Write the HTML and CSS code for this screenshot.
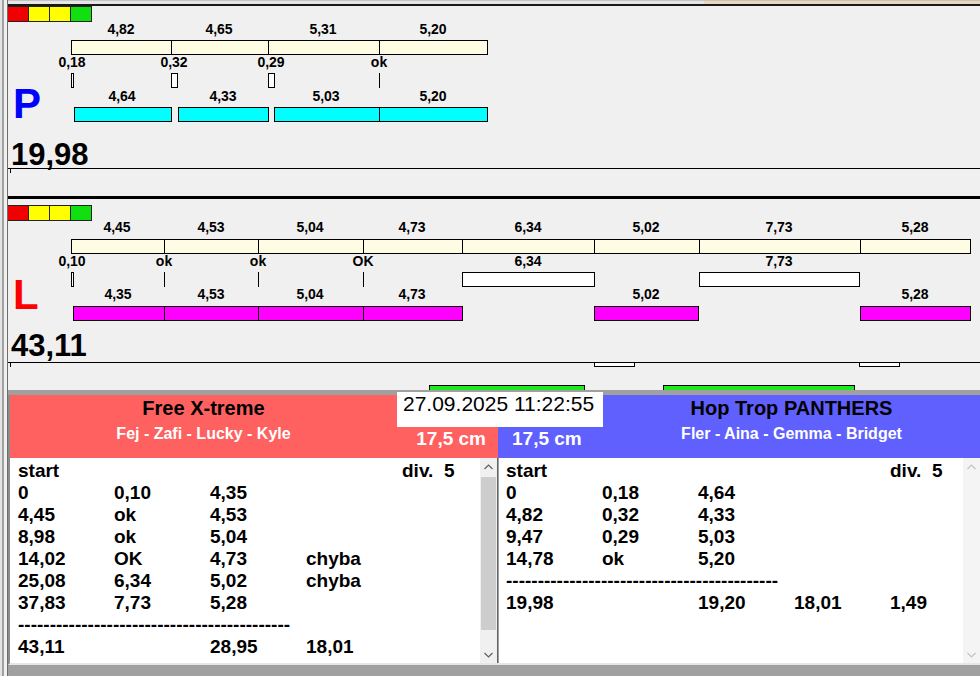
FILE: index.html
```html
<!DOCTYPE html>
<html lang="cs">
<head>
<meta charset="utf-8">
<title>Agility</title>
<link rel="stylesheet" href="styles.css">
</head>
<body>
<div class="app">
  <div class="frame"></div>
  <div class="main">
    <div class="topstrip"></div>

    <div class="chart chart-p">
      <div class="lights"><i class="red"></i><i class="yel"></i><i class="yel"></i><i class="grn"></i></div>

      <span class="lab r-top" style="left:113px">4,82</span>
      <span class="lab r-top" style="left:211px">4,65</span>
      <span class="lab r-top" style="left:315px">5,31</span>
      <span class="lab r-top" style="left:425px">5,20</span>

      <div class="seg cream r-bar1" style="left:63px;width:101px"></div>
      <div class="seg cream r-bar1" style="left:163px;width:98px"></div>
      <div class="seg cream r-bar1" style="left:260px;width:112px"></div>
      <div class="seg cream r-bar1" style="left:371px;width:109px"></div>

      <span class="lab r-gap" style="left:64px">0,18</span>
      <span class="lab r-gap" style="left:166px">0,32</span>
      <span class="lab r-gap" style="left:263px">0,29</span>
      <span class="lab r-gap" style="left:371px">ok</span>

      <div class="tick r-tick" style="left:63px;width:3px"></div>
      <div class="tick r-tick" style="left:163px;width:7px"></div>
      <div class="tick r-tick" style="left:260px;width:7px"></div>
      <div class="tickline r-tick" style="left:371px"></div>

      <span class="lab r-lab2" style="left:114px">4,64</span>
      <span class="lab r-lab2" style="left:215px">4,33</span>
      <span class="lab r-lab2" style="left:318px">5,03</span>
      <span class="lab r-lab2" style="left:425px">5,20</span>

      <div class="seg cyan r-bar2" style="left:66px;width:98px"></div>
      <div class="seg cyan r-bar2" style="left:170px;width:91px"></div>
      <div class="seg cyan r-bar2" style="left:266px;width:106px"></div>
      <div class="seg cyan r-bar2" style="left:371px;width:109px"></div>

      <div class="letter letter-p">P</div>
      <div class="total">19,98</div>
      <div class="axis"></div>
      <div class="axis-tick"></div>
    </div>

    <div class="sep"></div>

    <div class="chart chart-l">
      <div class="lights"><i class="red"></i><i class="yel"></i><i class="yel"></i><i class="grn"></i></div>

      <span class="lab r-top" style="left:109px">4,45</span>
      <span class="lab r-top" style="left:203px">4,53</span>
      <span class="lab r-top" style="left:302px">5,04</span>
      <span class="lab r-top" style="left:404px">4,73</span>
      <span class="lab r-top" style="left:520px">6,34</span>
      <span class="lab r-top" style="left:638px">5,02</span>
      <span class="lab r-top" style="left:771px">7,73</span>
      <span class="lab r-top" style="left:907px">5,28</span>

      <div class="seg cream r-bar1" style="left:63px;width:94px"></div>
      <div class="seg cream r-bar1" style="left:156px;width:95px"></div>
      <div class="seg cream r-bar1" style="left:250px;width:106px"></div>
      <div class="seg cream r-bar1" style="left:355px;width:100px"></div>
      <div class="seg cream r-bar1" style="left:454px;width:133px"></div>
      <div class="seg cream r-bar1" style="left:586px;width:106px"></div>
      <div class="seg cream r-bar1" style="left:691px;width:162px"></div>
      <div class="seg cream r-bar1" style="left:852px;width:111px"></div>

      <span class="lab r-gap" style="left:64px">0,10</span>
      <span class="lab r-gap" style="left:156px">ok</span>
      <span class="lab r-gap" style="left:250px">ok</span>
      <span class="lab r-gap" style="left:355px">OK</span>
      <span class="lab r-gap" style="left:520px">6,34</span>
      <span class="lab r-gap" style="left:771px">7,73</span>

      <div class="tick r-tick" style="left:63px;width:3px"></div>
      <div class="tickline r-tick" style="left:156px"></div>
      <div class="tickline r-tick" style="left:250px"></div>
      <div class="tickline r-tick" style="left:355px"></div>
      <div class="seg white r-tick" style="left:454px;width:133px"></div>
      <div class="seg white r-tick" style="left:691px;width:161px"></div>

      <span class="lab r-lab2" style="left:110px">4,35</span>
      <span class="lab r-lab2" style="left:203px">4,53</span>
      <span class="lab r-lab2" style="left:302px">5,04</span>
      <span class="lab r-lab2" style="left:404px">4,73</span>
      <span class="lab r-lab2" style="left:638px">5,02</span>
      <span class="lab r-lab2" style="left:907px">5,28</span>

      <div class="seg magenta r-bar2" style="left:65px;width:92px"></div>
      <div class="seg magenta r-bar2" style="left:156px;width:95px"></div>
      <div class="seg magenta r-bar2" style="left:250px;width:106px"></div>
      <div class="seg magenta r-bar2" style="left:355px;width:100px"></div>
      <div class="seg magenta r-bar2" style="left:586px;width:105px"></div>
      <div class="seg magenta r-bar2" style="left:852px;width:111px"></div>

      <div class="letter letter-l">L</div>
      <div class="total">43,11</div>
      <div class="axis"></div>
      <div class="axis-tick"></div>
      <div class="seg white r-under" style="left:586px;width:41px"></div>
      <div class="seg white r-under" style="left:851px;width:41px"></div>
      <div class="seg green r-green" style="left:421px;width:156px"></div>
      <div class="seg green r-green" style="left:655px;width:192px"></div>
    </div>

    <div class="band"></div>

    <div class="bottom">
      <section class="team team-red">
        <header class="team-head">
          <div class="team-name">Free X-treme</div>
          <div class="team-dogs">Fej - Zafi - Lucky - Kyle</div>
          <div class="team-size">17,5 cm</div>
        </header>
        <div class="list-wrap">
          <div class="list">
            <div class="row"><span>start</span><span></span><span></span><span></span><span class="pre">div.  5</span></div>
            <div class="row"><span>0</span><span>0,10</span><span>4,35</span></div>
            <div class="row"><span>4,45</span><span>ok</span><span>4,53</span></div>
            <div class="row"><span>8,98</span><span>ok</span><span>5,04</span></div>
            <div class="row"><span>14,02</span><span>OK</span><span>4,73</span><span>chyba</span></div>
            <div class="row"><span>25,08</span><span>6,34</span><span>5,02</span><span>chyba</span></div>
            <div class="row"><span>37,83</span><span>7,73</span><span>5,28</span></div>
            <div class="row"><span class="dashes">-------------------------------------------</span></div>
            <div class="row"><span>43,11</span><span></span><span>28,95</span><span>18,01</span></div>
          </div>
          <div class="scrollbar">
            <div class="sb-btn"><svg width="9" height="6" viewBox="0 0 9 6"><polyline points="0.5,5 4.5,1 8.5,5" fill="none" stroke="currentColor" stroke-width="1.2"/></svg></div>
            <div class="sb-track"><div class="sb-thumb"></div></div>
            <div class="sb-btn"><svg width="9" height="6" viewBox="0 0 9 6"><polyline points="0.5,1 4.5,5 8.5,1" fill="none" stroke="currentColor" stroke-width="1.2"/></svg></div>
          </div>
        </div>
      </section>

      <section class="team team-blue">
        <header class="team-head">
          <div class="team-name">Hop Trop PANTHERS</div>
          <div class="team-dogs">Fler - Aina - Gemma - Bridget</div>
          <div class="team-size">17,5 cm</div>
        </header>
        <div class="list-wrap">
          <div class="list">
            <div class="row"><span>start</span><span></span><span></span><span></span><span class="pre">div.  5</span></div>
            <div class="row"><span>0</span><span>0,18</span><span>4,64</span></div>
            <div class="row"><span>4,82</span><span>0,32</span><span>4,33</span></div>
            <div class="row"><span>9,47</span><span>0,29</span><span>5,03</span></div>
            <div class="row"><span>14,78</span><span>ok</span><span>5,20</span></div>
            <div class="row"><span class="dashes">-------------------------------------------</span></div>
            <div class="row"><span>19,98</span><span></span><span>19,20</span><span>18,01</span><span>1,49</span></div>
          </div>
          <div class="scrollbar disabled">
            <div class="sb-btn"><svg width="9" height="6" viewBox="0 0 9 6"><polyline points="0.5,5 4.5,1 8.5,5" fill="none" stroke="currentColor" stroke-width="1.2"/></svg></div>
            <div class="sb-track"></div>
            <div class="sb-btn"><svg width="9" height="6" viewBox="0 0 9 6"><polyline points="0.5,1 4.5,5 8.5,1" fill="none" stroke="currentColor" stroke-width="1.2"/></svg></div>
          </div>
        </div>
      </section>
    </div>

    <div class="footer"></div>
  </div>

  <div class="datebox">27.09.2025 11:22:55</div>
</div>
</body>
</html>
```

FILE: styles.css
```css
* { box-sizing: border-box; }
html, body { margin: 0; padding: 0; }
body {
  width: 980px;
  height: 676px;
  overflow: hidden;
  background: #f0f0f0;
  font-family: "Liberation Sans", Arial, sans-serif;
  color: #000;
}
.app {
  position: relative;
  display: flex;
  width: 980px;
  height: 676px;
}
.frame {
  width: 8px;
  flex: none;
  background: linear-gradient(to right, #e3e3e3 0 2px, #a0a0a0 2px 4px, #f0f0f0 4px 7px, #6d6d6d 7px 8px);
}
.main {
  width: 972px;
  flex: none;
  display: flex;
  flex-direction: column;
}
.topstrip {
  height: 6px;
  flex: none;
  border-bottom: 2px solid #1a1a1a;
  background:
    linear-gradient(to bottom, #c4c4c4 0 1px, transparent 1px),
    linear-gradient(to right, #e6e6e6 0 696px, #ead7b7 696px);
}

/* ---------- chart canvas ---------- */
.chart {
  position: relative;
  overflow: hidden;
  flex: none;
}
.chart-p { height: 190px; }
.chart-l { height: 191px; padding-top: 6px; }
.sep { height: 3px; flex: none; background: #000; }

.lights {
  display: flex;
  height: 16px;
  border-top: 1px solid #222;
  border-bottom: 1px solid #222;
  width: 84px;
}
.lights i {
  width: 21px;
  border-right: 1px solid #222;
}
.lights .red { background: #f00000; }
.lights .yel { background: #ffff00; }
.lights .grn { background: #10e010; }

.lab {
  position: absolute;
  transform: translateX(-50%);
  font-size: 14px;
  font-weight: bold;
  line-height: 15px;
  white-space: nowrap;
}
.seg {
  position: absolute;
  height: 15px;
  border: 1px solid #000;
}
.cream { background: #fefce2; }
.cyan { background: #00ffff; }
.magenta { background: #ff00ff; }
.white { background: #ffffff; }
.green { background: #1ee81e; height: 12px; }
.tick {
  position: absolute;
  height: 15px;
  border: 1px solid #000;
  background: #fff;
}
.tickline {
  position: absolute;
  width: 1px;
  height: 15px;
  background: #000;
}

.chart-p .r-top { top: 16px; }
.chart-p .r-bar1 { top: 34px; }
.chart-p .r-gap { top: 49px; }
.chart-p .r-tick { top: 67px; }
.chart-p .r-lab2 { top: 83px; }
.chart-p .r-bar2 { top: 101px; }

.chart-l .r-top { top: 21px; }
.chart-l .r-bar1 { top: 40px; }
.chart-l .r-gap { top: 55px; }
.chart-l .r-tick { top: 73px; }
.chart-l .r-lab2 { top: 88px; }
.chart-l .r-bar2 { top: 107px; }
.chart-l .r-under { top: 163px; height: 5px; }
.chart-l .r-green { top: 186px; }

.letter {
  position: absolute;
  left: 5px;
  font-size: 42px;
  line-height: 48px;
  font-weight: bold;
}
.letter-p { top: 74px; color: #0000ff; }
.letter-l { top: 72px; color: #ff0000; }

.total {
  position: absolute;
  left: 3px;
  font-size: 31px;
  line-height: 36px;
  font-weight: bold;
}
.chart-p .total { top: 131px; }
.chart-l .total { top: 129px; }

.axis {
  position: absolute;
  left: 0;
  right: 0;
  height: 1px;
  background: #000;
}
.axis-tick {
  position: absolute;
  left: 2px;
  width: 1px;
  height: 5px;
  background: #000;
}
.chart-p .axis { top: 162px; }
.chart-p .axis-tick { top: 162px; }
.chart-l .axis { top: 163px; }
.chart-l .axis-tick { top: 163px; }

.band { height: 5px; flex: none; background: #a0a0a0; }

/* ---------- bottom teams ---------- */
.bottom {
  height: 270px;
  flex: none;
  display: flex;
  border-left: 2px solid #8c8c8c;
  border-bottom: 2px solid #e6e6e6;
}
.team {
  display: flex;
  flex-direction: column;
}
.team-red { width: 488px; }
.team-blue { width: 482px; }

.team-head {
  height: 63px;
  flex: none;
  display: grid;
  grid-template-rows: 24px 1fr;
}
.team-red .team-head {
  background: #ff6060;
  grid-template-columns: 1fr 101px;
  grid-template-areas: "name ." "dogs size";
}
.team-blue .team-head {
  background: #6060ff;
  grid-template-columns: 105px 1fr;
  grid-template-areas: ". name" "size dogs";
}
.team-name {
  grid-area: name;
  margin-top: 1px;
  text-align: center;
  font-size: 20px;
  line-height: 24px;
  font-weight: bold;
  color: #000;
}
.team-dogs {
  grid-area: dogs;
  margin-top: 5px;
  text-align: center;
  font-size: 16px;
  line-height: 20px;
  font-weight: bold;
  color: #fff;
}
.team-size {
  grid-area: size;
  margin-top: 9px;
  font-size: 19px;
  line-height: 22px;
  font-weight: bold;
  color: #fff;
  white-space: nowrap;
}
.team-red .team-size { text-align: right; padding-right: 12px; }
.team-blue .team-size { padding-left: 14px; }

.list-wrap {
  height: 205px;
  flex: none;
  display: flex;
}
.team-red .list-wrap { border-right: 1px solid #646464; }
.team-blue .list-wrap { border-left: 1px solid #a0a0a0; }
.list {
  flex: 1;
  background: #fff;
  padding-top: 2px;
  font-size: 19px;
  line-height: 22px;
  font-weight: bold;
  overflow: hidden;
}
.team-red .list { padding-left: 8px; }
.team-blue .list { padding-left: 7px; }
.row {
  display: grid;
  grid-template-columns: repeat(5, 96px);
  height: 22px;
  white-space: nowrap;
}
.row .pre { white-space: pre; }
.row .dashes { grid-column: 1 / 5; }

.scrollbar {
  width: 17px;
  flex: none;
  display: flex;
  flex-direction: column;
  background: #f0f0f0;
  color: #606060;
}
.scrollbar.disabled { background: #f4f4f4; color: #c4c4c4; }
.sb-btn {
  height: 17px;
  flex: none;
  display: flex;
  align-items: center;
  justify-content: center;
}
.sb-track { flex: 1; padding: 2px 1px 0; }
.sb-thumb { height: 153px; background: #cdcdcd; }

.footer { flex: 1; background: #a0a0a0; }

.datebox {
  position: absolute;
  left: 397px;
  top: 392px;
  width: 206px;
  height: 35px;
  background: #fff;
  padding-left: 6px;
  font-size: 21px;
  line-height: 24px;
  font-weight: normal;
  white-space: nowrap;
}
```
